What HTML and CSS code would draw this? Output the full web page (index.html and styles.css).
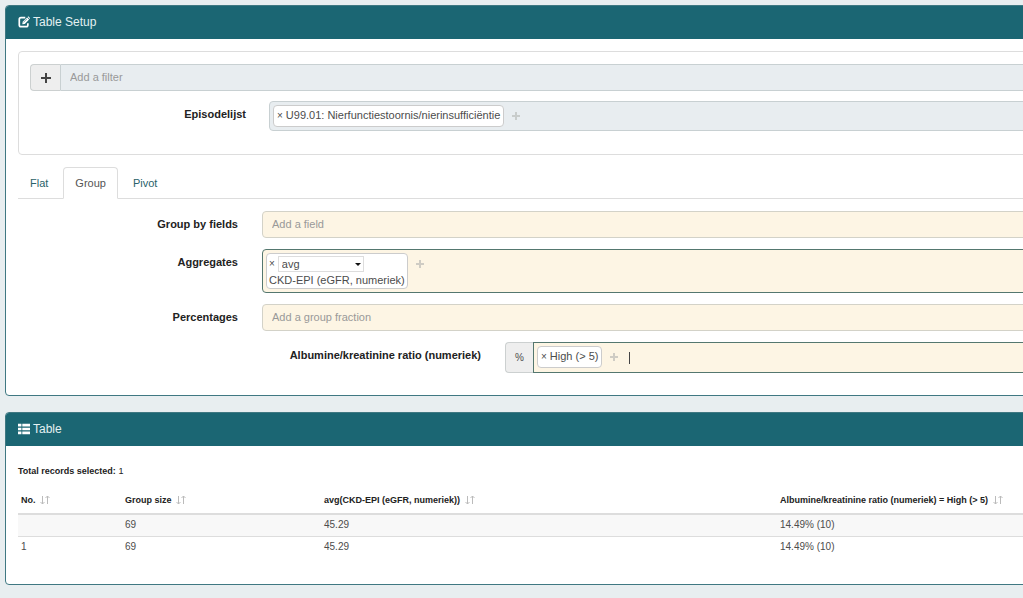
FILE: index.html
```html
<!DOCTYPE html>
<html lang="nl">
<head>
<meta charset="utf-8">
<title>Table Setup</title>
<link rel="stylesheet" href="styles.css">
</head>
<body>
<main class="page">
  <section class="panel">
    <h2 class="panel-head">
      <svg class="head-icon" viewBox="0 0 14 14"><path d="M8.500 2H3.500Q1.500 2 1.500 4V10.500Q1.500 12.500 3.500 12.500H9.500Q11.500 12.500 11.500 10.500V8.500" fill="none" stroke="#fff" stroke-width="2"/><path d="M5 9.500L5.500 6.800L10.600 1.700L13 4.100L7.900 9.200Z" fill="#fff"/><path d="M11.200 1.100L12 .3L14 2.300V3L13.600 3.500Z" fill="#fff"/><path d="M6.500 7.300L10.500 3.300" stroke="#1b6673" stroke-width=".6"/></svg>
      Table Setup
    </h2>
    <div class="panel-body">
      <div class="filters">
        <div class="input-group">
          <button class="addon" type="button" aria-label="Add filter"><svg class="plus" viewBox="0 0 10 10"><path d="M5 0V10M0 5H10" stroke="#444" stroke-width="2"/></svg></button>
          <input class="field field-blue" type="text" placeholder="Add a filter" aria-label="Add a filter">
        </div>
        <div class="form-row">
          <span class="label" id="episode">Episodelijst</span>
          <div class="tags field-blue" role="group" aria-labelledby="episode">
            <span class="tag"><button class="remove" type="button" aria-label="Remove">×</button>U99.01: Nierfunctiestoornis/nierinsufficiëntie</span>
            <button class="add" type="button" aria-label="Add"><svg class="small-plus" viewBox="0 0 8 8"><path d="M4 0V8M0 4H8" stroke="#c8cccb" stroke-width="2"/></svg></button>
          </div>
        </div>
      </div>
      <nav class="tabs">
        <a class="tab" href="#flat">Flat</a>
        <a class="tab active" href="#group">Group</a>
        <a class="tab" href="#pivot">Pivot</a>
      </nav>
      <div class="form">
        <div class="form-row">
          <label class="label" for="fields">Group by fields</label>
          <input class="field" id="fields" type="text" placeholder="Add a field">
        </div>
        <div class="form-row">
          <span class="label" id="aggregates">Aggregates</span>
          <div class="tags focus" role="group" aria-labelledby="aggregates">
            <div class="tag tag-tall">
              <div class="tag-line"><button class="remove" type="button" aria-label="Remove">×</button><span class="select-wrap"><select class="select" aria-label="Aggregate function"><option>avg</option></select></span></div>
              <div>CKD-EPI (eGFR, numeriek)</div>
            </div>
            <button class="add" type="button" aria-label="Add"><svg class="small-plus" viewBox="0 0 8 8"><path d="M4 0V8M0 4H8" stroke="#cfccc4" stroke-width="2"/></svg></button>
          </div>
        </div>
        <div class="form-row">
          <label class="label" for="percentages">Percentages</label>
          <input class="field" id="percentages" type="text" placeholder="Add a group fraction">
        </div>
        <div class="form-row nested">
          <span class="label" id="ratio">Albumine/kreatinine ratio (numeriek)</span>
          <div class="input-group" role="group" aria-labelledby="ratio">
            <span class="addon percent">%</span>
            <div class="tags focus joined">
              <span class="tag"><button class="remove" type="button" aria-label="Remove">×</button>High (&gt; 5)</span>
              <button class="add" type="button" aria-label="Add"><svg class="small-plus" viewBox="0 0 8 8"><path d="M4 0V8M0 4H8" stroke="#cfccc4" stroke-width="2"/></svg></button>
              <span class="caret"></span>
            </div>
          </div>
        </div>
      </div>
    </div>
  </section>

  <section class="panel">
    <h2 class="panel-head">
      <svg class="head-icon" viewBox="0 0 14 14"><path d="M0 1H4V4H0ZM5 1H14V4H5ZM0 5.500H4V8.500H0ZM5 5.500H14V8.500H5ZM0 10H4V13H0ZM5 10H14V13H5Z" fill="#fff"/></svg>
      Table
    </h2>
    <div class="panel-body results">
      <p class="total"><b>Total records selected:</b> 1</p>
      <table class="table">
        <colgroup><col class="col-no"><col class="col-size"><col class="col-avg"><col></colgroup>
        <thead>
          <tr>
            <th>No. <svg class="sort" viewBox="0 0 10 10"><path d="M2.500 1V9M.5 7L2.500 9L4.500 7M7.500 9V1M5.500 3L7.500 1L9.500 3" fill="none" stroke="#bbb"/></svg></th>
            <th>Group size <svg class="sort" viewBox="0 0 10 10"><path d="M2.500 1V9M.5 7L2.500 9L4.500 7M7.500 9V1M5.500 3L7.500 1L9.500 3" fill="none" stroke="#bbb"/></svg></th>
            <th>avg(CKD-EPI (eGFR, numeriek)) <svg class="sort" viewBox="0 0 10 10"><path d="M2.500 1V9M.5 7L2.500 9L4.500 7M7.500 9V1M5.500 3L7.500 1L9.500 3" fill="none" stroke="#bbb"/></svg></th>
            <th>Albumine/kreatinine ratio (numeriek) = High (&gt; 5) <svg class="sort" viewBox="0 0 10 10"><path d="M2.500 1V9M.5 7L2.500 9L4.500 7M7.500 9V1M5.500 3L7.500 1L9.500 3" fill="none" stroke="#bbb"/></svg></th>
          </tr>
        </thead>
        <tbody>
          <tr><td></td><td>69</td><td>45.29</td><td>14.49% (10)</td></tr>
          <tr><td>1</td><td>69</td><td>45.29</td><td>14.49% (10)</td></tr>
        </tbody>
      </table>
    </div>
  </section>
</main>
</body>
</html>
```

FILE: styles.css
```css
* { box-sizing: border-box; }
body {
  margin: 0;
  overflow-x: hidden;
  background: #e8eef0;
  color: #4c4c4c;
  font: 11px/16px "Liberation Sans", Arial, sans-serif;
}
button, input, select { font: inherit; color: inherit; }

/* The panels run past the right edge of the window. */
.page {
  display: flex;
  flex-direction: column;
  gap: 16px;
  margin-right: -32px;
  padding: 5px 0 0 5px;
}
.panel {
  background: #fff;
  border: 1px solid #3f7882;
  border-radius: 4px;
  overflow: hidden;
}
.panel-head {
  display: flex;
  align-items: center;
  gap: 3px;
  margin: 0;
  padding: 8px 12px 9px;
  background: #1b6673;
  color: #e4f1f2;
  font-size: 12px;
  font-weight: normal;
}
.head-icon { width: 12px; height: 12px; }
.panel-body { padding: 12px 12px 22px; }

.filters {
  padding: 12px 11px 23px;
  border: 1px solid #ddd;
  border-radius: 4px;
}
.input-group { display: flex; min-width: 0; }
.addon {
  display: flex;
  align-items: center;
  justify-content: center;
  width: 30px;
  padding: 0;
  background: #eee;
  border: 1px solid #ccd0d0;
  border-right: 0;
  border-radius: 4px 0 0 4px;
}
.percent { width: 28px; font-size: 10px; }
.plus { width: 10px; height: 10px; }
.field {
  flex: 1;
  width: 100%;
  min-width: 0;
  height: 27px;
  padding: 4px 9px 5px;
  background: #fdf5e4;
  border: 1px solid #d3d2c8;
  border-radius: 4px;
}
.field-blue { background: #e8edf0; border-color: #c8d0d2; }
.input-group .field { border-radius: 0 4px 4px 0; }
.field::placeholder { color: #999; opacity: 1; }

.form-row {
  display: grid;
  grid-template-columns: 220px minmax(0, 1fr);
  column-gap: 24px;
}
.filters .form-row { grid-template-columns: 216px minmax(0, 1fr); column-gap: 23px; margin-top: 10px; }
.form-row.nested { grid-template-columns: 463px minmax(0, 1fr); }
.label {
  padding-top: 5px;
  color: #222;
  font-weight: bold;
  text-align: right;
}
.tags {
  display: flex;
  flex: 1;
  align-items: flex-start;
  gap: 8px;
  min-width: 0;
  padding: 3px;
  background: #fdf5e4;
  border: 1px solid #ccc;
  border-radius: 4px;
}
.tags.field-blue { background: #e8edf0; border-color: #c8d0d2; }
.tags.focus { border-color: #54776f; }
.tags.joined { padding-bottom: 4px; border-radius: 0; }
.tag {
  padding: 1px 3px 2px;
  background: #fff;
  border: 1px solid #ccc;
  border-radius: 4px;
  white-space: nowrap;
}
.tag-tall { padding: 2px 2px 0; }
.tag-line { display: flex; gap: 3px; }
.remove {
  padding: 0;
  margin-right: 3px;
  background: none;
  border: 0;
  font-size: 10px;
}
.tag-line .remove { margin: 0; }
.select-wrap { position: relative; }
.select-wrap::after {
  content: "";
  position: absolute;
  right: 3px;
  top: 7px;
  border: 3px solid transparent;
  border-top-color: #111;
  border-bottom: 0;
  pointer-events: none;
}
.select {
  display: block;
  appearance: none;
  width: 86px;
  height: 16px;
  padding: 0 3px;
  background: #fff;
  border: 1px solid #ddd;
  line-height: 14px;
}
.add {
  display: flex;
  padding: 7px 0;
  background: none;
  border: 0;
}
.small-plus { width: 8px; height: 8px; }
.caret { width: 1px; height: 12px; margin: 6px 0 0 3px; background: #444; }

.tabs {
  display: flex;
  gap: 3px;
  margin-top: 12px;
  border-bottom: 1px solid #ddd;
}
.tab {
  margin-bottom: -1px;
  padding: 7px 11px;
  border: 1px solid transparent;
  border-radius: 4px 4px 0 0;
  color: #2a626a;
  text-decoration: none;
}
.tab.active {
  background: #fff;
  border-color: #ddd #ddd #fff;
  color: #555;
}
.form {
  display: flex;
  flex-direction: column;
  gap: 11px;
  padding-top: 12px;
}

.results { padding: 18px 12px 26px; font-size: 9px; line-height: 14px; }
.total { margin: 0; color: #222; }
.table {
  width: 100%;
  margin-top: 9px;
  border-collapse: collapse;
  table-layout: fixed;
}
.col-no { width: 104px; }
.col-size { width: 199px; }
.col-avg { width: 456px; }
.table th, .table td { padding: 3px; text-align: left; white-space: nowrap; }
.table th {
  height: 27px;
  color: #222;
  border-bottom: 2px solid #ddd;
}
.table td { height: 22px; font-size: 10px; }
.table tbody tr + tr td { border-top: 1px solid #ddd; }
.table tbody tr:first-child { background: #f8f8f8; }
.sort { width: 10px; height: 10px; margin-left: 2px; vertical-align: -2px; }
```
